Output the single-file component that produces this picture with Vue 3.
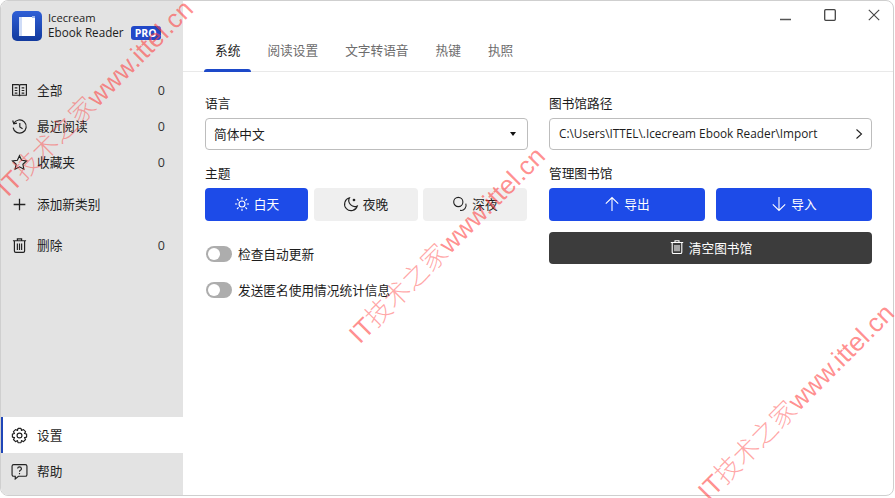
<script setup>
const tabs = ['系统', '阅读设置', '文字转语音', '热键', '执照']
const marks = [
  { key: 'a', cls: 'mark mark-a' },
  { key: 'b', cls: 'mark mark-b' },
  { key: 'c', cls: 'mark mark-c' }
]
</script>

<template>
  <div class="page">
    <div class="window">
      <aside class="sidebar">
        <div class="brand">
          <svg class="logo" width="30" height="30" viewBox="0 0 30 30">
            <defs>
              <linearGradient id="lg" x1="0" y1="0" x2="0" y2="1">
                <stop offset="0" stop-color="#2f5fd6" />
                <stop offset="1" stop-color="#123a9e" />
              </linearGradient>
            </defs>
            <rect width="30" height="30" rx="5" fill="url(#lg)" />
            <path d="M7 6h16v19H7z" fill="#fff" />
            <path d="M7 6h3v19H7z" fill="#cfdcf7" />
            <path d="M20 5h3v2h-3z" fill="#9fb8ee" />
          </svg>
          <div class="brand-text">
            <div class="brand-top">Icecream</div>
            <div class="brand-line">Ebook Reader<span class="pro">PRO</span></div>
          </div>
        </div>

        <nav class="nav nav-top">
          <div class="row">
            <svg class="ico" viewBox="0 0 16 16" fill="none" stroke="#222" stroke-width="1.1">
              <path d="M1.500 2.500h5.500q1 0 1 1v10q0-1-1-1H1.500zM14.500 2.500H9q-1 0-1 1v10q0-1 1-1h5.500z" />
              <path d="M3.500 5.500h2.500M3.500 8h2.500M3.500 10.500h2.500M10 5.500h2.500M10 8h2.500M10 10.500h2.500" />
            </svg>
            <span class="label">全部</span><span class="count">0</span>
          </div>
          <div class="row">
            <svg class="ico" viewBox="0 0 16 16" fill="none" stroke="#222" stroke-width="1.1">
              <path d="M2.600 5.200A6.200 6.200 0 1 1 2 9" />
              <path d="M1.600 2.400l1 3 3-.6M8.300 4.600v3.800l2.600 1.800" />
            </svg>
            <span class="label">最近阅读</span><span class="count">0</span>
          </div>
          <div class="row">
            <svg class="ico" viewBox="0 0 16 16" fill="none" stroke="#222" stroke-width="1.1">
              <path d="M8 1.600l2 4.300 4.600.6-3.400 3.200.9 4.600L8 12.100l-4.100 2.200.9-4.600L1.400 6.500 6 5.900z" />
            </svg>
            <span class="label">收藏夹</span><span class="count">0</span>
          </div>
        </nav>

        <nav class="nav nav-mid">
          <div class="row row-add">
            <svg class="ico" viewBox="0 0 16 16" fill="none" stroke="#222" stroke-width="1.2">
              <path d="M8 2.500v11M2.500 8h11" />
            </svg>
            <span class="label">添加新类别</span>
          </div>
          <div class="row">
            <svg class="ico" viewBox="0 0 16 16" fill="none" stroke="#222" stroke-width="1.1">
              <path d="M1.800 3.500h12.400M6 3.500V1.800h4v1.700M3.200 3.500v9.700q0 1.300 1.300 1.300h7q1.300 0 1.300-1.300V3.500" />
              <path d="M6 6v6.300M8 6v6.300M10 6v6.300" />
            </svg>
            <span class="label">删除</span><span class="count">0</span>
          </div>
        </nav>

        <nav class="nav nav-bottom">
          <div class="row row-active">
            <svg class="ico" viewBox="0 0 16 16" fill="none" stroke="#222" stroke-width="1.1">
              <path d="M6.600 1.300h2.800l.5 2 1.800-.9 2 2-1 1.700 2 .6v2.800l-2 .5 1 1.800-2 2-1.800-1-.5 2H6.600l-.5-2-1.800 1-2-2 1-1.800-2-.5V6.700l2-.6-1-1.700 2-2 1.800.9z" stroke-linejoin="round" />
              <circle cx="8" cy="8" r="2.300" />
            </svg>
            <span class="label">设置</span>
          </div>
          <div class="row">
            <svg class="ico" viewBox="0 0 16 16" fill="none" stroke="#222" stroke-width="1.1">
              <path d="M2.500 1.500h11q1.500 0 1.500 1.500v8q0 1.500-1.500 1.500H7l-3 2.500v-2.500H2.500Q1 12.500 1 11V3q0-1.500 1.500-1.500z" />
              <path d="M6.200 5.200Q6.400 3.600 8 3.600T9.800 5.300Q9.800 6.300 8.800 6.900 8 7.400 8 8.300M8 9.400v1.200" />
            </svg>
            <span class="label">帮助</span>
          </div>
        </nav>
      </aside>

      <main class="main">
        <div class="titlebar">
          <svg class="win-ico" viewBox="0 0 12 12" fill="none" stroke="#555" stroke-width="1.300"><path d="M0 10.500h11" /></svg>
          <svg class="win-ico" viewBox="0 0 12 12" fill="none" stroke="#444" stroke-width="1.300"><rect x=".7" y=".7" width="10.600" height="10.600" rx="1" /></svg>
          <svg class="win-ico" viewBox="0 0 12 12" fill="none" stroke="#444" stroke-width="1.100"><path d="M.8.800l10.400 10.400M11.200.8L.8 11.200" /></svg>
        </div>

        <div class="tabs">
          <div v-for="(t, i) in tabs" :key="t" class="tab" :class="{ active: i === 0 }">{{ t }}</div>
        </div>

        <div class="form">
          <section class="col">
            <div class="field-label">语言</div>
            <div class="input">
              <span class="txt">简体中文</span>
              <i class="caret"></i>
            </div>

            <div class="field-label label-gap">主题</div>
            <div class="theme-row">
              <button class="btn blue">
                <svg class="btn-ico" viewBox="0 0 16 16" fill="none" stroke="#fff" stroke-width="1.100">
                  <circle cx="8" cy="8" r="3" />
                  <path d="M8 1v2.200M8 12.800V15M1 8h2.200M12.800 8H15M3 3l1.600 1.600M11.400 11.400L13 13M13 3l-1.600 1.600M4.600 11.400L3 13" />
                </svg>白天
              </button>
              <button class="btn grey">
                <svg class="btn-ico" viewBox="0 0 16 16" fill="none" stroke="#222" stroke-width="1.100">
                  <path d="M6.500 1.800A6.500 6.500 0 1 0 14.300 10 6 6 0 0 1 6.500 1.800z" />
                  <circle cx="11" cy="4" r=".8" fill="#222" />
                </svg>夜晚
              </button>
              <button class="btn grey">
                <svg class="btn-ico" viewBox="0 0 16 16" fill="none" stroke="#222" stroke-width="1.100">
                  <circle cx="6.300" cy="6" r="4.600" />
                  <path d="M13.800 7.600A5 5 0 0 1 8 14.300" />
                </svg>深夜
              </button>
            </div>

            <label class="switch switch-first"><i class="knob"></i><span class="txt">检查自动更新</span></label>
            <label class="switch"><i class="knob"></i><span class="txt">发送匿名使用情况统计信息</span></label>
          </section>

          <section class="col">
            <div class="field-label">图书馆路径</div>
            <div class="input path">
              <span class="txt">C:\Users\ITTEL\.Icecream Ebook Reader\Import</span>
              <svg width="8" height="12" viewBox="0 0 8 12" fill="none" stroke="#222" stroke-width="1.100"><path d="M1.500 1.500L6.500 6l-5 4.500" /></svg>
            </div>

            <div class="field-label label-gap">管理图书馆</div>
            <div class="manage-row">
              <button class="btn blue">
                <svg class="btn-ico" viewBox="0 0 16 16" fill="none" stroke="#fff" stroke-width="1.100"><path d="M8 15V1.500M1.800 7.700L8 1.500l6.200 6.200" /></svg>导出
              </button>
              <button class="btn blue">
                <svg class="btn-ico" viewBox="0 0 16 16" fill="none" stroke="#fff" stroke-width="1.100"><path d="M8 1v13.500M1.800 8.300L8 14.500l6.200-6.200" /></svg>导入
              </button>
            </div>
            <button class="btn dark">
              <svg class="btn-ico" viewBox="0 0 16 16" fill="none" stroke="#fff" stroke-width="1.100">
                <path d="M1.800 3.500h12.400M6 3.500V1.800h4v1.700M3.200 3.500v9.700q0 1.300 1.300 1.300h7q1.300 0 1.300-1.300V3.500" />
                <path d="M6 6v6.300M8 6v6.300M10 6v6.300" />
              </svg>清空图书馆
            </button>
          </section>
        </div>
      </main>
    </div>

    <div v-for="m in marks" :key="m.key" :class="m.cls">IT<span class="cjk">技术之家</span>www.ittel.cn</div>
  </div>
</template>

<style>
html, body { margin: 0; background: #fff; overflow: hidden; }
</style>

<style scoped>
.page {
  position: relative;
  width: 895px;
  height: 498px;
  overflow: hidden;
}
.window {
  box-sizing: border-box;
  width: 894px;
  height: 496px;
  display: flex;
  overflow: hidden;
  background: #fff;
  border: 1px solid #cfcfcf;
  border-radius: 8px;
  font-family: "Noto Sans CJK SC", "Open Sans", sans-serif;
  font-size: 12.700px;
  color: #1d1d1d;
}
.sidebar {
  width: 182px;
  flex: none;
  display: flex;
  flex-direction: column;
  background: #e3e3e3;
}
.brand {
  display: flex;
  align-items: center;
  gap: 6px;
  height: 49px;
  padding: 0 0 0 11px;
}
.logo { flex: none; }
.brand-text {
  font-family: "Open Sans", sans-serif;
  line-height: 15px;
  white-space: nowrap;
  padding-bottom: 1px;
}
.brand-top { font-size: 11.200px; }
.brand-line { display: flex; align-items: center; font-size: 11.700px; font-weight: 500; }
.pro {
  margin-left: 7px;
  padding: 0 4px;
  height: 14px;
  line-height: 14px;
  background: #2148c8;
  color: #fff;
  border-radius: 3px;
  font-size: 10.500px;
  font-weight: 700;
}
.nav { display: flex; flex-direction: column; }
.nav-top { margin-top: 22px; }
.nav-mid { margin-top: 1px; }
.nav-bottom { margin-top: auto; padding-bottom: 6px; }
.row {
  height: 36px;
  flex: none;
  display: flex;
  align-items: center;
  padding: 0 18px 0 10px;
}
.row-add { height: 46px; }
.row-active {
  background: #fff;
  box-shadow: inset 2px 0 0 #1f46b8;
}
.ico { width: 17px; height: 17px; flex: none; margin-right: 9px; }
.label { flex: 1; white-space: nowrap; padding-bottom: 2px; }
.count { font-family: "Open Sans", sans-serif; font-size: 12.500px; color: #333; }
.main { flex: 1; min-width: 0; display: flex; flex-direction: column; }
.titlebar {
  height: 30px;
  flex: none;
  display: flex;
  justify-content: flex-end;
  align-items: flex-start;
  gap: 32px;
  padding: 8px 13px 0 0;
  box-sizing: border-box;
}
.win-ico { width: 12px; height: 12px; }
.tabs {
  height: 41px;
  flex: none;
  box-sizing: border-box;
  display: flex;
  padding-left: 21px;
  border-bottom: 1px solid #e9e9e9;
}
.tab {
  position: relative;
  height: 40px;
  line-height: 38px;
  padding: 0 11px;
  margin-right: 5px;
  color: #6d6d6d;
  white-space: nowrap;
}
.tab.active { color: #1d1d1d; }
.tab.active::after {
  content: "";
  position: absolute;
  left: 0;
  right: 0;
  bottom: -1px;
  height: 3px;
  background: #1d49c9;
  border-radius: 3px 3px 0 0;
}
.form {
  display: grid;
  grid-template-columns: 323px 323px;
  column-gap: 21px;
  padding: 22px 0 0 22px;
}
.col { display: flex; flex-direction: column; min-width: 0; }
.field-label { height: 24px; line-height: 17px; color: #1d1d1d; white-space: nowrap; }
.label-gap { margin-top: 13px; height: 25px; line-height: 20px; }
.txt { padding-bottom: 2px; white-space: nowrap; }
.input {
  box-sizing: border-box;
  height: 32px;
  display: flex;
  align-items: center;
  justify-content: space-between;
  padding: 0 11px 0 8px;
  border: 1px solid #bdbdbd;
  border-radius: 4px;
  background: #fff;
}
.path { font-family: "Open Sans", sans-serif; font-size: 11.800px; padding: 0 8px 0 9px; }
.caret {
  width: 0;
  height: 0;
  border-left: 3.500px solid transparent;
  border-right: 3.500px solid transparent;
  border-top: 4px solid #111;
}
.btn {
  box-sizing: border-box;
  height: 33px;
  display: flex;
  align-items: center;
  justify-content: center;
  border: 0;
  border-radius: 4px;
  font: inherit;
  padding: 0 0 2px;
}
.btn-ico { width: 16px; height: 16px; margin-right: 4px; flex: none; }
.blue { background: #1d4be8; color: #fff; }
.grey { background: #efefef; color: #222; }
.dark { background: #3c3c3c; color: #fff; margin-top: 11px; height: 32px; width: 100%; }
.theme-row { display: grid; grid-template-columns: 103px 104px 104px; column-gap: 5.500px; }
.manage-row { display: grid; grid-template-columns: 156px 156px; column-gap: 11px; }
.switch { display: flex; align-items: center; height: 36px; white-space: nowrap; }
.switch-first { margin-top: 15px; }
.knob {
  position: relative;
  box-sizing: border-box;
  flex: none;
  width: 26px;
  height: 16px;
  margin: 0 6px 0 1px;
  border-radius: 8px;
  background: #adadad;
}
.knob::after {
  content: "";
  position: absolute;
  left: 2px;
  top: 2px;
  width: 12px;
  height: 12px;
  border-radius: 50%;
  background: #fff;
}
.mark {
  position: absolute;
  transform: rotate(-45deg);
  transform-origin: left bottom;
  font-family: "Liberation Sans", sans-serif;
  font-size: 26px;
  line-height: 30px;
  color: rgba(255, 60, 60, 0.58);
  white-space: nowrap;
  pointer-events: none;
}
.cjk { font-family: "Noto Sans CJK SC", sans-serif; font-weight: 300; color: rgba(255, 60, 60, 0.45); }
.mark-a { left: 12px; top: 170px; }
.mark-b { left: 364px; top: 317px; }
.mark-c { left: 713px; top: 474px; }
</style>
